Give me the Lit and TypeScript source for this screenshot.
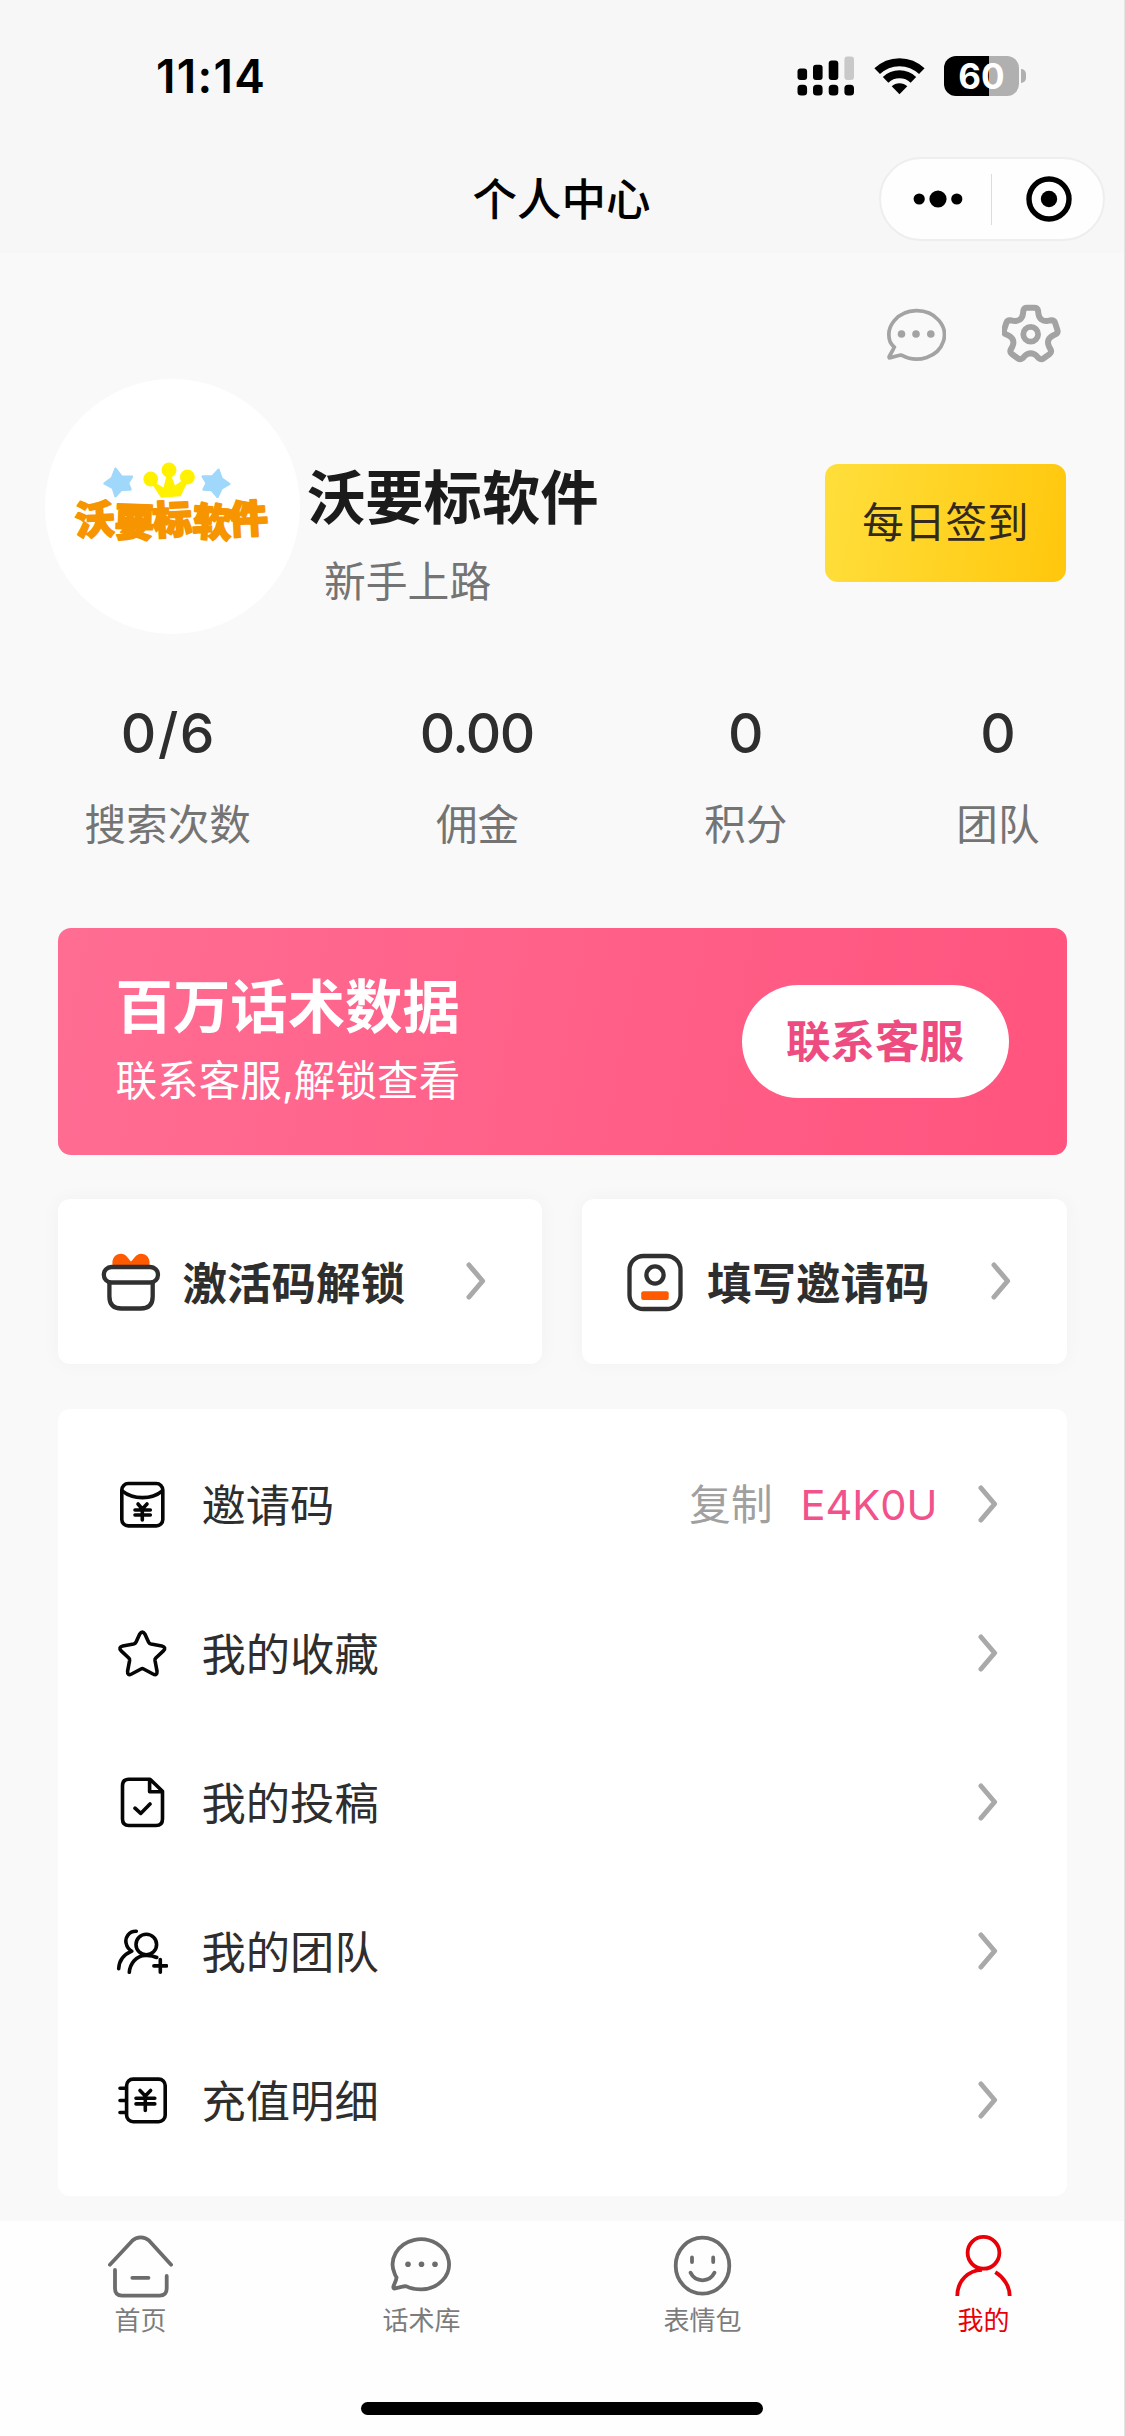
import { LitElement, html, css, svg, TemplateResult } from "lit";
import { customElement } from "lit/decorators.js";
import { classMap } from "lit/directives/class-map.js";

const gearPath = (() => {
  const cx = 28.7;
  const cy = 30.6;
  const out: string[] = [];
  for (let i = 0; i < 5; i++) {
    const a = (i * 72 * Math.PI) / 180;
    const p = (x: number, y: number) =>
      `${(cx + x * Math.cos(a) - y * Math.sin(a)).toFixed(2)} ${(cy + x * Math.sin(a) + y * Math.cos(a)).toFixed(2)}`;
    out.push(
      `${i === 0 ? "M" : "L"}${p(-10.9, -15)} Q${p(-8.3, -17)} ${p(-7.8, -20.5)} L${p(-7.3, -24)} Q${p(-6.6, -26.8)} ${p(-3.8, -26.8)} L${p(3.8, -26.8)} Q${p(6.6, -26.8)} ${p(7.3, -24)} L${p(7.8, -20.5)} Q${p(8.3, -17)} ${p(10.9, -15)}`
    );
  }
  return out.join(" ") + "Z";
})();

const listIcons: Record<string, TemplateResult> = {
  envelope: svg`<rect x="5.8" y="4.5" width="41" height="42.4" rx="6.5"/><path d="M6.5 12.2C17 20.8 36 20.8 46 12.2M22 25L26.3 30L31 25M26.3 30V41M19 31H34.3M19 36H34.3"/>`,
  star: svg`<path d="M23.6 6.3Q26.3 2 29 6.3L32.5 14Q33.2 15.6 35 16L45.8 18Q50.6 19.2 47.4 22.9L39.8 30Q38.8 31 39 32.5L41 43.2Q41.4 48.2 37 46L27.6 41Q26.3 40.3 25 41L15.6 46Q11.2 48.2 11.6 43.2L13.6 32.5Q13.8 31 12.8 30L5.2 22.9Q2 19.2 6.8 18L17.6 16Q19.4 15.6 20.1 14Z"/>`,
  doc: svg`<path d="M34 2.2H13Q6.5 2.2 6.5 8.7V42Q6.5 48.5 13 48.5H40Q46.5 48.5 46.5 42V14.2ZM33.6 2.5V14.8H46M19 31.2L24.7 36.4L34 27"/>`,
  team: svg`<circle cx="30.3" cy="18.5" r="10.3"/><path d="M20.3 5.3C13 5 8.6 11.5 10.2 17.5C10.9 21 12.6 23.4 15.8 25.2C8 28.5 3 35 2.7 42.8M13.3 46.3C14 38 20 29.5 29.5 29.5C33.8 29.3 37 29.8 40.7 31.5M44.3 33.5V46.3M37.9 39.9H50.7"/>`,
  book: svg`<rect x="10.6" y="4.1" width="38.6" height="42.6" rx="6.5"/><path d="M4 13.2H10M4 25.5H10M4 37.5H10M24 15.5L29.3 21L34.6 15.5M29.3 21V35.5M20 23.2H38.8M20 28.9H38.8"/>`,
};

const tabIcons: Record<string, TemplateResult> = {
  home: svg`<path d="M1.9 30.7L24.3 6.7C28.8 2.2 36.5 2.2 41.2 6.7L63.1 30.7M7 36V54.5Q7 61.6 14 61.6H51.5Q58.7 61.6 58.7 54.5V42M24.3 43.8H40.5"/>`,
  chat: svg`<path d="M7.6 43.5Q7.3 44 7 46L4.4 52.5Q4 54.9 6.2 54.4L13.5 52.6Q15.5 52 17.5 52.4C21.5 54.4 26 55.4 32.5 55.4A28.2 25.1 0 1 0 5.6 39.5Q6.2 41.5 7.6 43.5Z"/><g fill="currentColor" stroke="none"><circle cx="19" cy="30.3" r="2.8"/><circle cx="32.5" cy="30.3" r="2.8"/><circle cx="46" cy="30.3" r="2.8"/></g>`,
  smile: svg`<ellipse cx="32.5" cy="31.7" rx="26.8" ry="28"/><path d="M22 23.5V28M43.2 23.5V28M20.5 38.7C25.5 48.8 39.5 48.8 44.5 38.7"/>`,
  me: svg`<circle cx="32.5" cy="18.8" r="15.9"/><path stroke-linecap="butt" d="M6.3 62C6.3 46.5 17.5 36.2 31 35.8M44.3 38.2C52.5 43.2 58.7 52 58.7 62"/>`,
};

const chevron = html`<svg class="chevron" viewBox="0 0 20 38"><path d="M3 3L16.6 19L3 35"/></svg>`;

@customElement("app-root")
export class AppRoot extends LitElement {
  static styles = css`
    :host {
      display: block;
      width: 1125px;
      height: 2436px;
      font-family: Inter, "Noto Sans CJK SC", sans-serif;
      color: #2e2e2e;
    }
    * { box-sizing: border-box; }
    svg { display: block; flex: none; fill: none; stroke-linecap: round; stroke-linejoin: round; }
    .page {
      display: flex;
      flex-direction: column;
      height: 2436px;
      background: #f9f9f9;
      border-right: 1px solid #e4e4e4;
      overflow: hidden;
    }
    .header { height: 253px; flex: none; background: #f7f7f7; color: #000; }
    .status {
      height: 152px;
      display: flex;
      align-items: center;
      justify-content: space-between;
      padding: 0 98px 0 156px;
    }
    .time { font-size: 46px; line-height: 56px; font-weight: 600; letter-spacing: 1.3px; }
    .status-icons { display: flex; align-items: center; gap: 19px; }
    .signal { width: 58px; height: 40px; fill: #000; }
    .wifi { width: 51px; height: 38px; stroke: #000; stroke-linecap: butt; }
    .battery { display: flex; align-items: center; gap: 2px; }
    .cell {
      width: 75px;
      height: 40px;
      border-radius: 12px;
      background: linear-gradient(90deg, #000 60%, #b0b0b0 60%);
      color: #fff;
      font-size: 35px;
      font-weight: 700;
      line-height: 40px;
      text-align: center;
    }
    .nub { width: 5px; height: 14px; border-radius: 0 5px 5px 0; background: #b0b0b0; }
    .nav {
      height: 94px;
      display: grid;
      grid-template-columns: 1fr auto 1fr;
      align-items: center;
    }
    .nav-title { grid-column: 2; margin-right: 1px; padding-top: 1px; font-size: 44.5px; line-height: 60px; font-weight: 500; }
    .capsule {
      justify-self: end;
      margin-right: 19px;
      width: 226px;
      height: 84px;
      border-radius: 42px;
      border: 2px solid #eeeeee;
      background: #fefefe;
      display: flex;
      align-items: center;
    }
    .dots { width: 50px; height: 18px; margin-left: 32px; fill: #000; }
    .split { width: 1px; height: 51px; margin-left: 28px; background: #dcdcdc; }
    .target { width: 46px; height: 46px; margin-left: 34px; }

    .tools {
      height: 126px;
      flex: none;
      display: flex;
      justify-content: flex-end;
      gap: 56px;
      padding: 51px 62px 0 0;
      color: #a3a3a3;
    }
    .tools svg { width: 60px; height: 60px; stroke: currentColor; }

    .profile { height: 255px; flex: none; display: flex; padding-left: 45px; }
    .avatar {
      width: 255px;
      height: 255px;
      border-radius: 50%;
      background: #fff;
      flex: none;
    }
    .avatar svg { width: 255px; height: 255px; }
    .logo-text {
      font-family: "Noto Sans CJK SC", sans-serif;
      font-weight: 900;
      font-size: 39px;
      fill: #f79500;
      stroke: #f79500;
      stroke-width: 2;
    }
    .who { flex: 1; padding: 84px 0 0 7px; }
    .name { font-size: 58.3px; line-height: 70px; font-weight: 700; color: #1b1b1b; }
    .level { margin: 24px 0 0 17px; font-size: 41.8px; line-height: 50px; color: #747474; }
    .checkin {
      width: 241px;
      height: 118px;
      margin: 85px 58px 0 0;
      border-radius: 13px;
      background: linear-gradient(100deg, #ffdf3c, #ffc70c);
      font-size: 41.6px;
      line-height: 119px;
      text-align: center;
      color: #33291f;
    }

    .stats {
      height: 294px;
      flex: none;
      display: flex;
      justify-content: space-around;
      padding-top: 64px;
      text-align: center;
    }
    .value { font-size: 55px; line-height: 70px; font-weight: 500; }
    .value.ratio { letter-spacing: 1.6px; margin-right: -1.6px; }
    .value.money { letter-spacing: -1.6px; margin-right: 1.6px; }
    .label { margin-top: 32px; font-size: 41.6px; line-height: 50px; color: #747474; }

    .banner {
      height: 227px;
      flex: none;
      margin: 0 57.5px;
      padding: 0 58px;
      display: flex;
      align-items: center;
      justify-content: space-between;
      border-radius: 13px;
      background: linear-gradient(100deg, #ff6d93, #ff547e);
      color: #fff;
    }
    .banner-copy { padding-bottom: 6px; }
    .banner-title { font-size: 57.4px; line-height: 70px; font-weight: 700; }
    .banner-sub { margin-top: 14px; font-size: 41.6px; line-height: 50px; }
    .contact {
      width: 267px;
      height: 113px;
      border-radius: 57px;
      background: #fff;
      color: #ee4c80;
      font-size: 44.5px;
      line-height: 115px;
      font-weight: 600;
      text-align: center;
    }

    .cards {
      display: grid;
      grid-template-columns: 1fr 1fr;
      gap: 40px;
      margin: 44px 57.5px 0;
      flex: none;
    }
    .card {
      height: 165px;
      border-radius: 12px;
      background: #fff;
      box-shadow: 0 0 20px rgba(0, 0, 0, 0.035);
      display: flex;
      align-items: center;
      padding: 0 56px 0 42px;
    }
    .card-icon { width: 62px; height: 60px; stroke: #303030; stroke-width: 4.3; }
    .card-text { flex: 1; margin-left: 21px; padding-top: 4px; font-size: 44.5px; line-height: 60px; font-weight: 600; white-space: nowrap; }
    .chevron { width: 20px; height: 38px; margin-bottom: 2px; stroke: #a9a9a9; stroke-width: 5; }

    .list {
      height: 787px;
      flex: none;
      margin: 45px 57.5px 0;
      padding: 21px 69px 21px 58.5px;
      border-radius: 12px;
      background: #fff;
    }
    .row { height: 149px; display: flex; align-items: center; }
    .row-icon { width: 52px; height: 52px; stroke: #060606; stroke-width: 3.6; }
    .row-text { flex: 1; margin-left: 33.5px; padding-top: 2px; font-size: 44.3px; line-height: 60px; }
    .copy { font-size: 41.6px; line-height: 50px; color: #a0a0a0; }
    .code { margin: 0 40px 0 28px; font-size: 41.6px; line-height: 50px; font-weight: 400; color: #f2528a; }

    .tabbar {
      margin-top: auto;
      height: 215px;
      flex: none;
      background: #fefefe;
      display: flex;
      flex-direction: column;
      align-items: center;
      justify-content: space-between;
      padding: 13px 0 21px;
    }
    .tabs { width: 100%; display: grid; grid-template-columns: repeat(4, 1fr); }
    .tab { display: flex; flex-direction: column; align-items: center; gap: 7px; color: #6c6c6c; }
    .tab svg { width: 65px; height: 64px; stroke: currentColor; stroke-width: 3.8; }
    .tab-label { font-size: 26px; line-height: 32px; color: #7c7c7c; }
    .tab.active, .tab.active .tab-label { color: #e80008; }
    .home-bar { width: 402px; height: 13px; border-radius: 7px; background: #000; }
  `;

  private stats = [
    { value: "0/6", label: "搜索次数", kind: "ratio" },
    { value: "0.00", label: "佣金", kind: "money" },
    { value: "0", label: "积分", kind: "count" },
    { value: "0", label: "团队", kind: "count" },
  ];

  private rows = [
    { icon: "envelope", text: "邀请码", code: "E4K0U" },
    { icon: "star", text: "我的收藏" },
    { icon: "doc", text: "我的投稿" },
    { icon: "team", text: "我的团队" },
    { icon: "book", text: "充值明细" },
  ];

  private tabs = [
    { icon: "home", text: "首页", active: false },
    { icon: "chat", text: "话术库", active: false },
    { icon: "smile", text: "表情包", active: false },
    { icon: "me", text: "我的", active: true },
  ];

  private renderHeader() {
    return html`<div class="header">
      <div class="status">
        <div class="time">11:14</div>
        <div class="status-icons">
          <svg class="signal" viewBox="0 0 58 40">
            <rect x="0.5" y="12.5" width="9.6" height="11.5" rx="3"/><rect x="16" y="8.7" width="9.6" height="15.3" rx="3"/>
            <rect x="31.7" y="4.5" width="9.6" height="19.5" rx="3"/><rect x="47.4" y="0.5" width="9.6" height="23.5" rx="3" fill="#c9c9c9"/>
            <rect x="0.5" y="28.8" width="9.6" height="10.8" rx="3.6"/><rect x="16" y="28.8" width="9.6" height="10.8" rx="3.6"/>
            <rect x="31.7" y="28.8" width="9.6" height="10.8" rx="3.6"/><rect x="47.4" y="28.8" width="9.6" height="10.8" rx="3.6"/>
          </svg>
          <svg class="wifi" viewBox="0 0 51 38">
            <path stroke-width="8" d="M3.2 14.2A32 32 0 0 1 47.8 14.2M11.6 22.9A20 20 0 0 1 39.4 22.9"/>
            <path fill="#000" stroke="none" d="M25.5 37.3L17.7 29.3A11.2 11.2 0 0 1 33.3 29.3Z"/>
          </svg>
          <div class="battery"><div class="cell">60</div><div class="nub"></div></div>
        </div>
      </div>
      <div class="nav">
        <div class="nav-title">个人中心</div>
        <div class="capsule">
          <svg class="dots" viewBox="0 0 50 18"><circle cx="6.2" cy="9" r="5.6"/><circle cx="25" cy="9" r="8.6"/><circle cx="43.8" cy="9" r="5.6"/></svg>
          <div class="split"></div>
          <svg class="target" viewBox="0 0 46 46"><circle cx="23" cy="23" r="20" stroke="#000" stroke-width="5.4"/><circle cx="23" cy="23" r="8.2" fill="#000"/></svg>
        </div>
      </div>
    </div>`;
  }

  private renderProfile() {
    return html`<div class="tools">
        <svg viewBox="0 0 60 60">
          <path stroke-width="3.7" d="M8.4 43.2Q7.500 44 7.200 45.500L3.200 52.500Q2.600 54.400 4.600 53.600L12.500 51.500Q14.200 51 16 51.400A27.700 24.200 0 1 0 4.200 38Q6 41.200 8.400 43.200Z"/>
          <g fill="currentColor" stroke="none"><circle cx="15.5" cy="30" r="3.8"/><circle cx="30" cy="30" r="3.8"/><circle cx="44.8" cy="30" r="3.8"/></g>
        </svg>
        <svg viewBox="0 0 60 60"><path stroke-width="6" d=${gearPath}/><circle cx="28.7" cy="30.3" r="7.4" stroke-width="5.8"/></svg>
      </div>
      <div class="profile">
        <div class="avatar">
          <svg viewBox="0 0 255 255">
            <g fill="#9fd8fa" stroke="#9fd8fa" stroke-width="2.4">
              <path d="M70.500 89.700L76.500 97.500L87 97.700L83 104L85.500 110.500L76.500 110.800L70.500 117.300L67.800 109L59.500 104.500L67 99Z"/>
              <path d="M173.500 90.700L176.500 99.500L184.300 105L176.500 109.500L172.500 118L166.500 111L158.500 110.500L161.700 104L157.700 97.500L167.500 97.300Z"/>
            </g>
            <g fill="#fff100">
              <circle cx="105.700" cy="100" r="7.400"/><circle cx="124" cy="91" r="7.500"/><circle cx="142.400" cy="98" r="7.500"/>
              <path d="M107 105L111.500 104.500L118.500 108.500L121.700 96H126L130 106.500L137 101.500L142 104L135.700 117.300L116 118.700Z"/>
            </g>
            <text class="logo-text" transform="translate(31 156)" x="0 38.5 77.5 116 153.5" y="0 1 0 0 -1" rotate="-3 2 -3 4 -3">沃要标软件</text>
          </svg>
        </div>
        <div class="who">
          <div class="name">沃要标软件</div>
          <div class="level">新手上路</div>
        </div>
        <div class="checkin">每日签到</div>
      </div>`;
  }

  render() {
    return html`<div class="page" lang="zh-CN">
      ${this.renderHeader()}
      ${this.renderProfile()}
      <div class="stats">
        ${this.stats.map(
          (s) => html`<div>
            <div class="value ${s.kind}">${s.value}</div>
            <div class="label">${s.label}</div>
          </div>`
        )}
      </div>
      <div class="banner">
        <div class="banner-copy">
          <div class="banner-title">百万话术数据</div>
          <div class="banner-sub">联系客服,解锁查看</div>
        </div>
        <div class="contact">联系客服</div>
      </div>
      <div class="cards">
        <div class="card">
          <svg class="card-icon" viewBox="0 0 62 60">
            <path fill="#ff5a00" stroke="none" d="M13 15C10.5 6 16 1.7 21 1.7C26 1.7 27.5 6 31 9.5C34.5 6 36.5 1.7 41 1.7C46 1.7 51.5 6 49 15Z"/>
            <rect x="3.8" y="15" width="54.2" height="15.5" rx="7.7"/>
            <path d="M9.4 30.5V44.5Q9.4 56.5 21.4 56.5H40.7Q52.7 56.5 52.7 44.5V30.5"/>
          </svg>
          <div class="card-text">激活码解锁</div>
          ${chevron}
        </div>
        <div class="card">
          <svg class="card-icon" viewBox="0 0 62 60">
            <rect x="5.5" y="4" width="51" height="53" rx="14"/>
            <circle cx="31" cy="23" r="8.6"/>
            <rect x="17.2" y="39.3" width="27.5" height="8.8" rx="2" fill="#ff5a00" stroke="none"/>
          </svg>
          <div class="card-text">填写邀请码</div>
          ${chevron}
        </div>
      </div>
      <div class="list">
        ${this.rows.map(
          (r) => html`<div class="row">
            <svg class="row-icon" viewBox="0 0 52 52">${listIcons[r.icon]}</svg>
            <div class="row-text">${r.text}</div>
            ${r.code ? html`<div class="copy">复制</div><div class="code">${r.code}</div>` : ""}
            ${chevron}
          </div>`
        )}
      </div>
      <div class="tabbar">
        <div class="tabs">
          ${this.tabs.map(
            (t) => html`<div class=${classMap({ tab: true, active: t.active })}>
              <svg viewBox="0 0 65 64">${tabIcons[t.icon]}</svg>
              <div class="tab-label">${t.text}</div>
            </div>`
          )}
        </div>
        <div class="home-bar"></div>
      </div>
    </div>`;
  }
}
